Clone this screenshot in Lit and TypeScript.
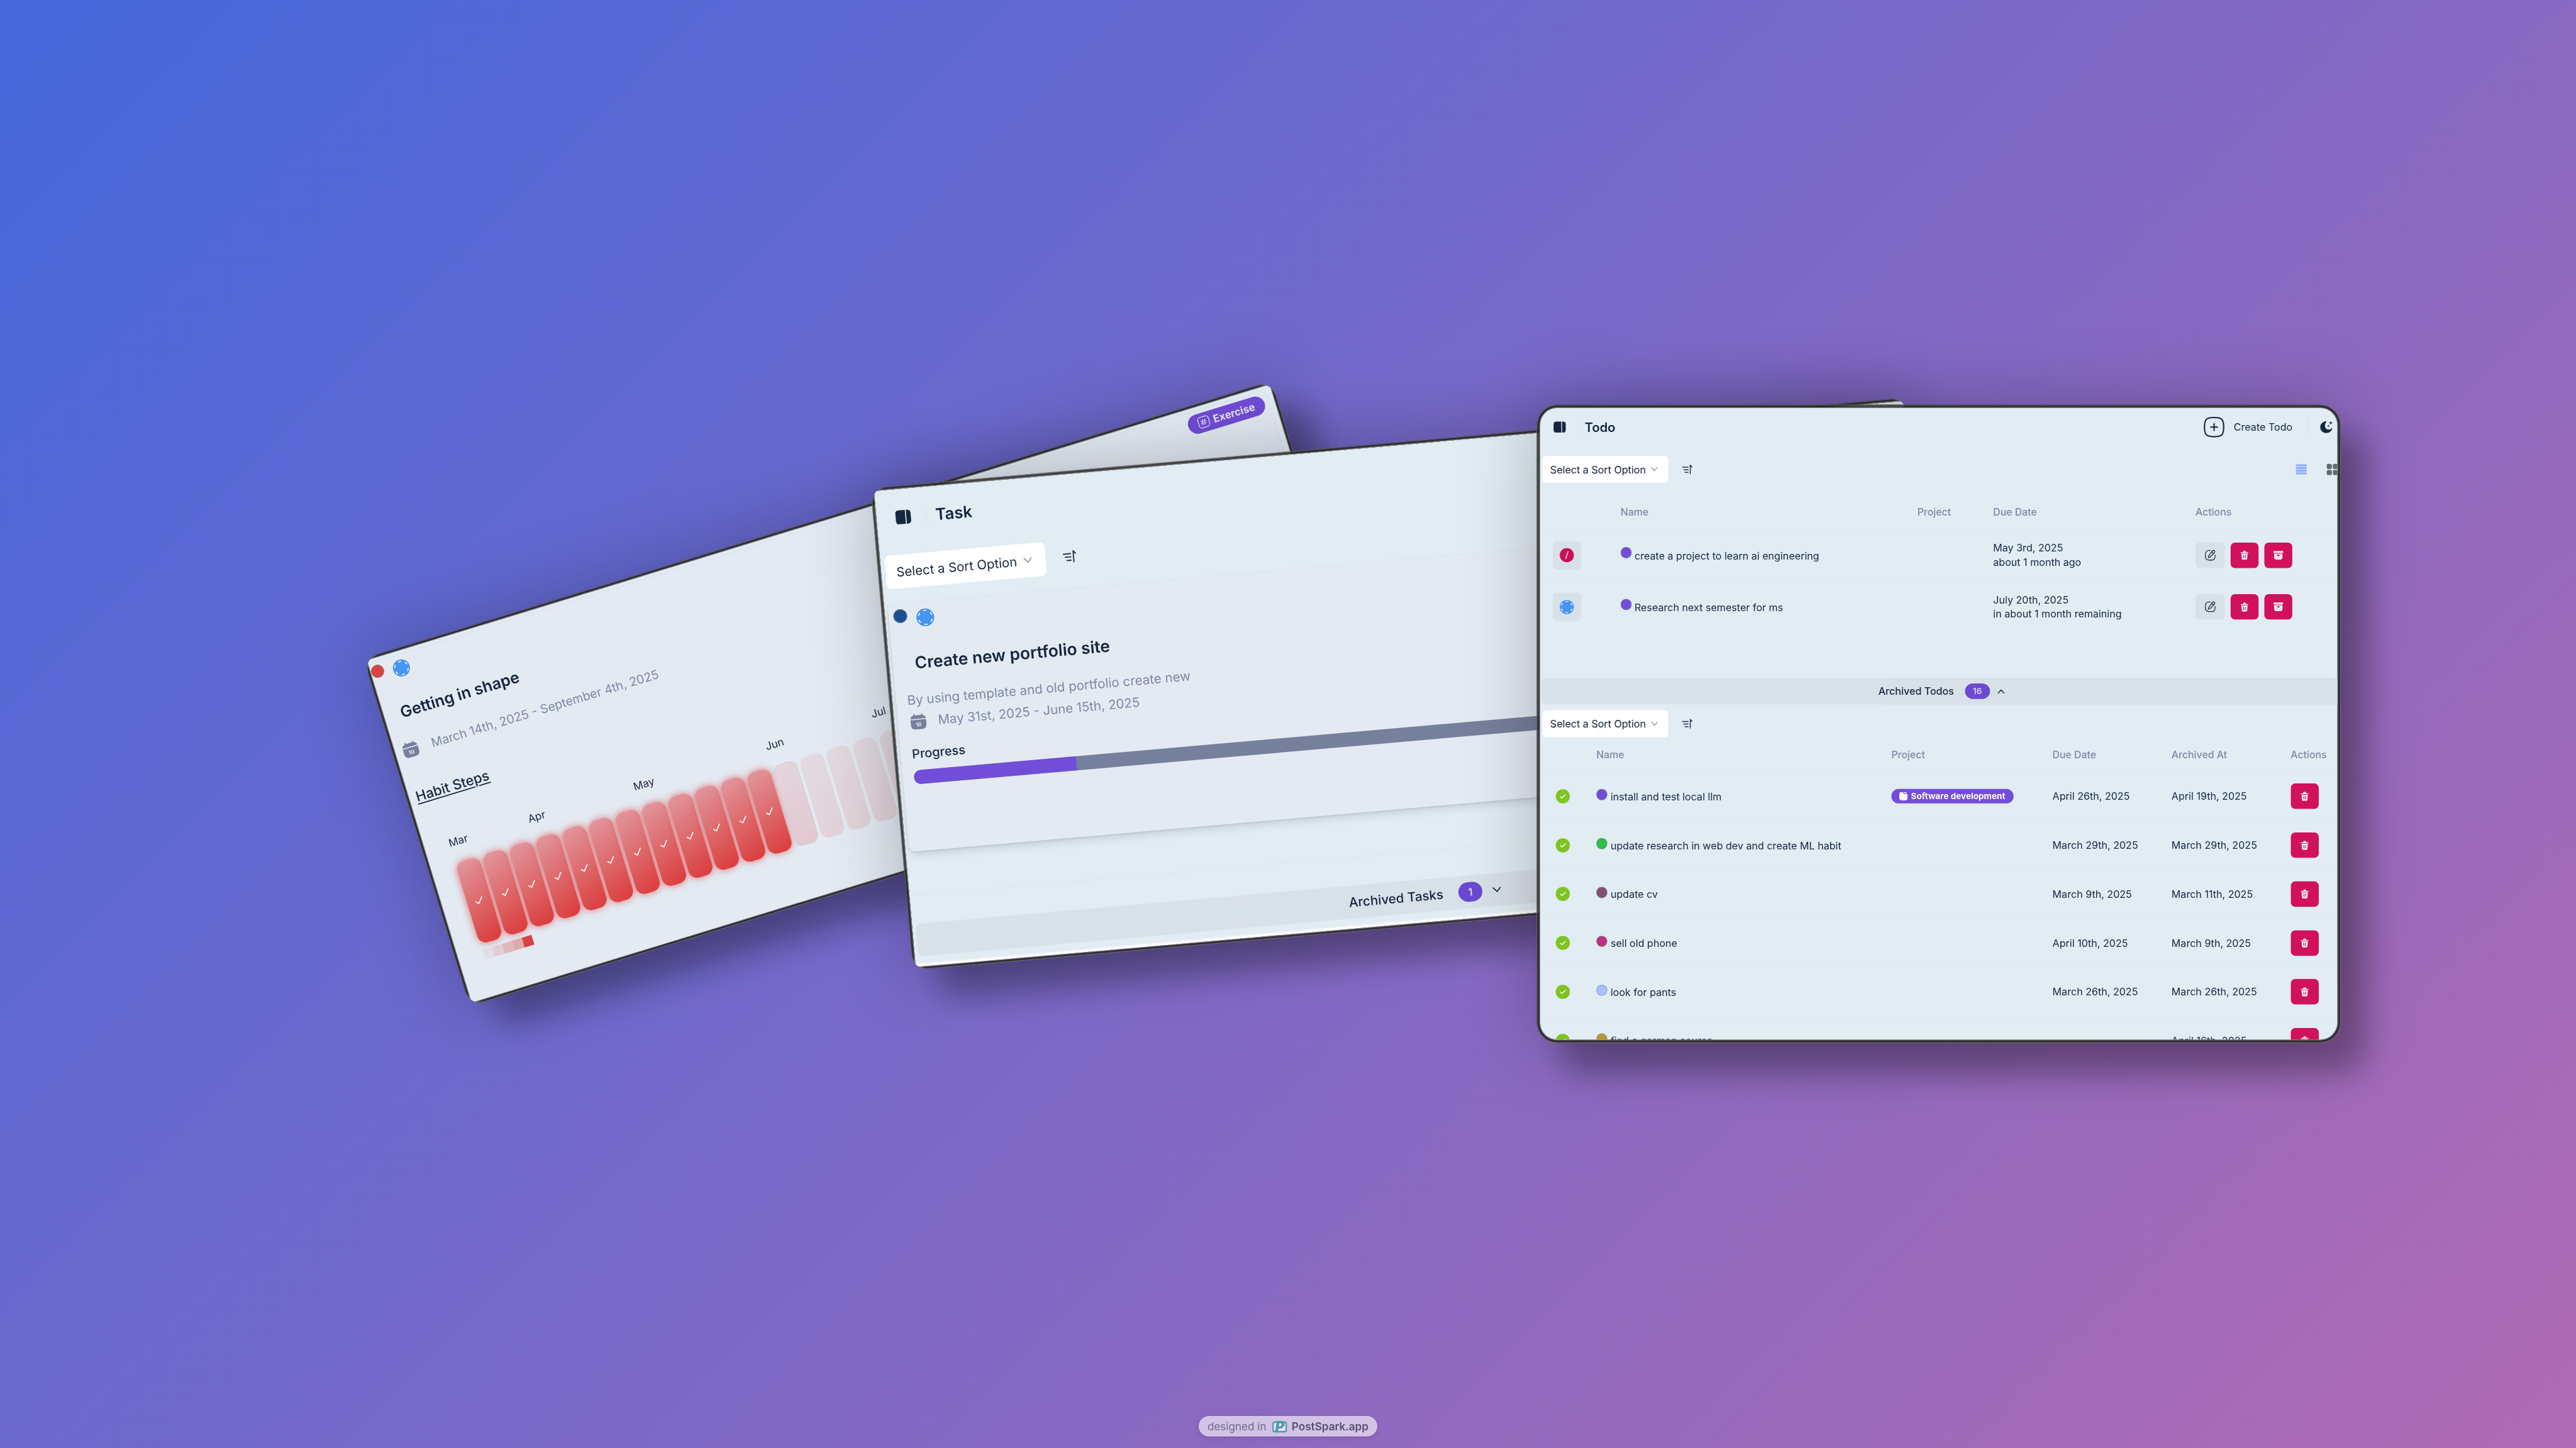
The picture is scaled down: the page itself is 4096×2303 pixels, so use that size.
import { LitElement, html, css, svg, nothing } from "lit";
import { customElement, property } from "lit/decorators.js";
import { classMap } from "lit/directives/class-map.js";

/* ---------- icons ---------- */

const icons = {
  sidebar: svg`<svg viewBox="0 0 34 31"><path fill="currentColor" d="M8 0h13.6v31H8c-5.600 0-8-2.400-8-8V8C0 2.400 2.400 0 8 0z"/><path fill="currentColor" d="M23.800 0H26c5.600 0 8 2.400 8 8v15c0 5.600-2.400 8-8 8h-2.200z"/></svg>`,
  chevronDown: svg`<svg viewBox="0 0 20 13"><path d="M1.500 1.500 10 11l8.500-9.500" fill="none" stroke="currentColor" stroke-width="2.600" stroke-linecap="round" stroke-linejoin="round"/></svg>`,
  chevronUp: svg`<svg viewBox="0 0 20 13"><path d="M1.500 11.500 10 2l8.500 9.500" fill="none" stroke="currentColor" stroke-width="2.600" stroke-linecap="round" stroke-linejoin="round"/></svg>`,
  sort: svg`<svg viewBox="0 0 30 30"><g fill="none" stroke="currentColor" stroke-width="2.700" stroke-linecap="round" stroke-linejoin="round"><path d="M1.500 8.200h16M5 15.500h12.500M8.500 23h9"/><path d="M23.500 27V2.500l5 5.600"/></g></svg>`,
  pending: svg`<svg viewBox="0 0 40 40"><circle cx="20" cy="20" r="20" fill="#4796ef"/><circle cx="20" cy="20" r="15.800" fill="none" stroke="#e3eaf2" stroke-width="2.800" stroke-linecap="round" pathLength="60" stroke-dasharray="3.200 6.800" stroke-dashoffset="-3.400"/></svg>`,
  overdue: svg`<svg viewBox="0 0 40 40"><circle cx="20" cy="20" r="20" fill="#c91058"/><path d="M23 10.500 17.200 29.500" stroke="#e3d3de" stroke-width="3" stroke-linecap="round"/></svg>`,
  done: svg`<svg viewBox="0 0 40 40"><circle cx="20" cy="20" r="20" fill="#7ec422"/><path d="M13.500 20.700 17.700 24.700 27 15.800" fill="none" stroke="#e9f3e0" stroke-width="3" stroke-linecap="round" stroke-linejoin="round"/></svg>`,
  check: svg`<svg viewBox="0 0 24 24"><path d="M2.500 13.500 9 20 21.500 4.500" fill="none" stroke="#fdf3f3" stroke-width="3" stroke-linecap="round" stroke-linejoin="round"/></svg>`,
  edit: svg`<svg viewBox="0 0 30 30"><g fill="none" stroke="currentColor" stroke-width="2.300" stroke-linecap="round" stroke-linejoin="round"><path d="M28.500 14.500V16c0 9.500-3 12.500-13.500 12.500S1.500 25.500 1.500 15 4.500 1.500 13 1.500h2"/><path d="m20 3.600 1.300-1.300c3.500-3 8.200 1.700 5.300 5.200l-11 11.400c-1.600 1.600-4.200 2-5.900 2.300.3-1.900.5-4.200 2-5.700z"/><path d="M19.500 4.800c.6 2.500 2.200 4.200 4.900 4.900"/></g></svg>`,
  trash: svg`<svg viewBox="0 0 24 29"><path fill="currentColor" d="M1.800 5.700h5C7.600 2.800 8.700 1 12 1s4.400 1.800 5.200 4.700h5c1.800 0 1.800 2.700 0 2.700H1.800C0 8.400 0 5.700 1.800 5.700z"/><path fill="currentColor" fill-rule="evenodd" d="M2.600 10h18.800l-1.200 14c-.3 3-1.500 4-4.300 4H8.100c-2.800 0-4-1-4.300-4zM8.200 14l.5 9h1.900l-.4-9zm5.600 0-.4 9h1.900l.5-9z"/></svg>`,
  archive: svg`<svg viewBox="0 0 28 25"><path fill="currentColor" d="M2 0h24c1.400 0 2 .6 2 2v1.800c0 1.400-.6 2-2 2H2c-1.400 0-2-.6-2-2V2C0 .6.600 0 2 0z"/><path fill="currentColor" fill-rule="evenodd" d="M2 7.600h24V17c0 5.800-2 8-8 8h-8c-6 0-8-2.200-8-8zm8.500 3.200v2.400c0 1 .5 1.500 1.500 1.500h4c1 0 1.500-.5 1.500-1.500v-2.400z"/></svg>`,
  plusBox: svg`<svg viewBox="0 0 56 56"><path d="M2 28C2 7 7 2 28 2s26 5 26 26-5 26-26 26S2 49 2 28z" fill="none" stroke="currentColor" stroke-width="3.600"/><path d="M28 19v18M19 28h18" stroke="currentColor" stroke-width="3.600" stroke-linecap="round"/></svg>`,
  moon: svg`<svg viewBox="0 0 34 34"><path fill="currentColor" d="M16 1.500C7.500 2.300 0 9 0 17.600 0 26.500 7 34 16.500 34 25 34 32 28.500 33.200 21c.2-1.200-1-1.500-1.600-.6-4.600 6.400-15.800 5-18-2.900-1.600-5.700.6-10.800 3.300-14.300.7-1-.1-1.800-.9-1.700z"/><path fill="currentColor" d="m29 1 1.500 3.600L34 6l-3.500 1.500L29 11l-1.500-3.500L24 6l3.500-1.400zM22.500 10.500l1.100 2.400 2.400 1.100-2.400 1.100-1.100 2.400-1.100-2.400L19 14l2.400-1.100z"/></svg>`,
  list: svg`<svg viewBox="0 0 30 28"><rect width="30" height="28" rx="3" fill="#bfd2fa"/><rect width="30" height="5" rx="2"/><rect y="7.600" width="30" height="5" rx="2"/><rect y="15.200" width="30" height="5" rx="2"/><rect y="22.800" width="30" height="5" rx="2"/></svg>`,
  grid: svg`<svg viewBox="0 0 31 31"><rect width="14" height="14" rx="4.500"/><rect x="16.800" width="14" height="14" rx="4.500"/><rect y="16.800" width="14" height="14" rx="4.500"/><rect x="16.800" y="16.800" width="14" height="14" rx="4.500"/></svg>`,
  calendar: svg`<svg viewBox="0 0 44 44"><path fill="currentColor" d="M9.500 1.500c0-2 3-2 3 0V4.300c2.400-.2 16.600-.2 19 0V1.500c0-2 3-2 3 0v3.100c5.500.8 8.700 3.800 9.300 9.900H.200C.8 8.400 4 5.400 9.500 4.600z"/><path fill="currentColor" d="M0 17h44v12c0 11-4 15-15 15H15C4 44 0 40 0 29z"/><text x="22" y="36" text-anchor="middle" font-family="Inter, sans-serif" font-weight="700" font-size="15" fill="#e3eaf2">10</text></svg>`,
  hash: svg`<svg viewBox="0 0 34 34"><rect x="1.500" y="1.500" width="31" height="31" rx="8" fill="none" stroke="currentColor" stroke-width="2.200"/><path d="M14.800 9.500 12.600 24.500M21.400 9.500 19.200 24.500M10 14h14.500M9.500 20H24" stroke="currentColor" stroke-width="2.200" stroke-linecap="round"/></svg>`,
  folder: svg`<svg viewBox="0 0 24 24"><path fill="currentColor" d="M1 6c0-4 1.500-5.500 5.500-5.500h4.200l3 5.200h8.800c1 1.300 1 3 1 5.300v5c0 5.500-1.500 7.500-7 7.500h-8C2.500 23.500 1 21.500 1 16z"/><path fill="currentColor" d="M13.200.5h3.300c2.800 0 4.600 1 5.400 3.200h-6.900z"/></svg>`,
  postspark: svg`<svg viewBox="0 0 40 33"><rect x="2" y="5" width="36" height="26" rx="4" fill="#ece6f5" stroke="#4c9cab" stroke-width="4"/><text x="7.500" y="30.500" font-family="Inter, sans-serif" font-style="italic" font-weight="900" font-size="39" fill="#4c9cab">P</text></svg>`,
};

const shared = css`
  :host {
    display: block;
    font-family: Inter, "Liberation Sans", sans-serif;
    color: #16263f;
    box-sizing: border-box;
  }
  * { box-sizing: border-box; }
  svg { display: block; width: 100%; height: 100%; overflow: visible; }
  .row { display: flex; align-items: center; }
  .grow { flex: 1; }
  .muted { color: #7f88a6; }
`;

/* ---------- shared pieces ---------- */

@customElement("window-frame")
class WindowFrame extends LitElement {
  static styles = css`
    :host {
      display: block;
      box-sizing: border-box;
      padding: var(--edge, 9px);
      border-radius: var(--radius, 44px);
      overflow: hidden;
      background: rgba(36, 36, 36, 0.86);
      box-shadow:
        inset 0 0 0 2px rgba(160, 160, 160, 0.55),
        0 0 200px rgba(0, 0, 0, 0.25),
        70px 84px 84px rgba(0, 0, 0, 0.28);
    }
    .screen {
      width: 100%;
      height: 100%;
      overflow: hidden;
      border-radius: var(--inner, 0);
      background: #e1ecf3;
    }
    .ring {
      height: 100%;
      border-radius: var(--inner, 0);
      box-shadow: 0 0 0 2px #7b7b7b;
    }
  `;
  render() {
    return html`<div class="ring"><div class="screen"><slot></slot></div></div>`;
  }
}

@customElement("sort-picker")
class SortPicker extends LitElement {
  static styles = [
    shared,
    css`
      :host { display: flex; align-items: center; }
      .select {
        display: flex;
        align-items: center;
        justify-content: space-between;
        width: var(--w, 347px);
        height: var(--h, 74.600px);
        padding: 0 var(--pr, 29px) 0 var(--pl, 22px);
        border-radius: var(--r, 10px);
        background: #fff;
        font-size: var(--fs, 27.900px);
        white-space: nowrap;
      }
      .select span:first-child { padding-top: 1.500px; }
      .chevron { width: var(--cw, 18px); height: var(--ch, 11.500px); color: #8b93a6; }
      .sort { width: var(--sw, 29px); height: var(--sw, 29px); margin-left: var(--sm, 38.500px); color: #24354f; }
    `,
  ];
  render() {
    return html`
      <div class="select"><span>Select a Sort Option</span><span class="chevron">${icons.chevronDown}</span></div>
      <span class="sort">${icons.sort}</span>
    `;
  }
}

@customElement("archive-bar")
class ArchiveBar extends LitElement {
  static styles = [
    shared,
    css`
      .bar {
        display: flex;
        align-items: center;
        height: 100%;
        background: #d8e0e8;
        border-radius: var(--r, 12px);
        font-weight: 500;
        font-size: var(--fs, 27.900px);
        white-space: nowrap;
      }
      .count {
        display: grid;
        place-items: center;
        width: var(--bw, 69px);
        height: var(--bh, 43px);
        margin-left: var(--bm, 30px);
        border-radius: 999px;
        background: #6c49d2;
        color: #d9d2f1;
        font-weight: 600;
        font-size: var(--bfs, 23.300px);
      }
      .chevron { width: var(--cw, 19px); height: var(--ch, 12px); margin-left: var(--cm, 21px); }
    `,
  ];
  @property() label = "";
  @property({ type: Number }) count = 0;
  @property({ type: Boolean }) open = false;
  render() {
    return html`<div class="bar">
      <span>${this.label}</span><span class="count">${this.count}</span>
      <span class="chevron">${this.open ? icons.chevronUp : icons.chevronDown}</span>
    </div>`;
  }
}

/* ---------- habit card ---------- */

const MONTHS = [
  { name: "Mar", week: 0 },
  { name: "Apr", week: 3 },
  { name: "May", week: 7 },
  { name: "Jun", week: 12 },
  { name: "Jul", week: 16 },
];
const WEEKS = 24;
const DONE_WEEKS = 12;

@customElement("habit-card")
class HabitCard extends LitElement {
  static styles = [
    shared,
    css`
      :host { height: 100%; padding: 11px 0 0 1px; }
      .panel {
        width: 2583px;
        height: 990px;
        border-radius: 20px 20px 0 0;
        background: #e3eaf2;
        box-shadow: 0 0 6px rgba(120, 130, 150, 0.15);
      }
      .top { height: 72px; padding: 0 11px 0 0; }
      .dot {
        width: 36px; height: 36px; margin: -20px 24px 0 0; border-radius: 50%;
        background: #db4141; box-shadow: inset 0 0 0 2px rgba(120, 120, 140, 0.55);
      }
      .status { width: 47px; height: 47px; }
      .pill {
        display: flex; align-items: center; gap: 11px;
        width: 220px; height: 54px; margin-top: -3px; padding-left: 28px;
        border-radius: 27px; background: #704cd6; color: #e6e2f5;
        font-weight: 700; font-size: 28.600px;
      }
      .pill .ic { width: 33px; height: 33px; flex: none; }
      .title { height: 60px; margin: 51px 0 0 45px; line-height: 60px; font-weight: 600; font-size: 43.500px; }
      .date { height: 60px; margin: 45px 0 0 21px; font-size: 33.800px; }
      .date .ic { width: 43px; height: 43px; margin-right: 38px; color: #787f9e; }
      .steps {
        height: 44px; margin: 77.500px 0 0 18px; line-height: 44px; font-weight: 500; font-size: 38px;
        text-decoration: underline; text-decoration-thickness: 3px; text-underline-offset: 6px;
      }
      .chart {
        width: 2523px; height: 427px; margin: 72px 0 0 30px; padding: 35px 0 0 36px;
        border-radius: 20px; border: 1.500px solid #dfe7ee;
      }
      .months { display: grid; grid-template-columns: repeat(30, 76.100px); height: 40px; line-height: 40px; font-size: 29.300px; }
      .bars { display: flex; gap: 8.100px; margin-top: 37px; }
      .bar {
        display: grid; place-items: center; flex: none; width: 68px; height: 234px; border-radius: 24px;
        background: linear-gradient(150deg, rgba(219, 64, 64, 0.09), rgba(219, 64, 64, 0.14));
      }
      .bar.done {
        background: linear-gradient(160deg, #e0949a 4%, #db3f3f 96%);
        box-shadow: 0 0 20px rgba(226, 66, 66, 0.75);
      }
      .bar.now {
        background: linear-gradient(160deg, #e4d5dd, #e2c8d0);
        box-shadow: inset 0 0 0 2px #ced0d0;
      }
      .bar .ic { width: 24px; height: 24px; }
      .legend { display: flex; margin: 16px 0 0 3px; }
      .legend span { width: 28.200px; height: 28.200px; background: #db4141; }
      .l0 { opacity: 0.07; }
      .l1 { opacity: 0.17; }
      .l2 { opacity: 0.3; }
      .l3 { opacity: 0.38; }
    `,
  ];
  render() {
    return html`<div class="panel">
      <div class="row top">
        <span class="dot"></span><span class="status">${icons.pending}</span><span class="grow"></span>
        <span class="pill"><span class="ic">${icons.hash}</span>Exercise</span>
      </div>
      <div class="title">Getting in shape</div>
      <div class="row date muted"><span class="ic">${icons.calendar}</span>March 14th, 2025 - September 4th, 2025</div>
      <div class="steps">Habit Steps</div>
      <div class="chart">
        <div class="months">
          ${MONTHS.map((m) => html`<span style="grid-column:${m.week + 1};grid-row:1">${m.name}</span>`)}
        </div>
        <div class="bars">
          ${Array.from({ length: WEEKS }, (_, i) => html`<span
            class=${classMap({ bar: true, done: i < DONE_WEEKS, now: i === DONE_WEEKS })}
          >${i < DONE_WEEKS ? html`<span class="ic">${icons.check}</span>` : nothing}</span>`)}
        </div>
        <div class="legend">${["l0", "l1", "l2", "l3", "l4"].map((c) => html`<span class=${c}></span>`)}</div>
      </div>
    </div>`;
  }
}

/* ---------- task card ---------- */

@customElement("task-card")
class TaskCard extends LitElement {
  static styles = [
    shared,
    css`
      :host { display: flex; flex-direction: column; height: 100%; background: #e1ecf3; }
      .head { height: 157px; padding-left: 53px; font-weight: 600; font-size: 44.500px; }
      .head .ic { width: 42px; height: 39px; }
      .head .div { width: 2px; height: 60px; margin: 0 22px 0 44px; background: #dfe7ef; }
      sort-picker {
        margin: 24px 0 0 12px;
        --w: 443px; --h: 93px; --pl: 30px; --pr: 38px; --r: 14px; --fs: 35.300px;
        --cw: 23px; --ch: 15px; --sw: 37px; --sm: 48px;
      }
      .panel {
        width: 2828px; height: 683px; margin: 43px 0 0 10px; padding: 18px 31px 0 31px;
        border-radius: 20px; background: #e3eaf2;
        box-shadow: 0 12px 24px -4px rgba(60, 70, 90, 0.2), 0 2px 4px rgba(60, 70, 90, 0.12);
      }
      .top { height: 49px; }
      .dot {
        width: 38px; height: 38px; margin: -20px 25px 0 -18px; border-radius: 50%;
        background: #174f92; box-shadow: inset 0 0 0 2px rgba(120, 125, 150, 0.7);
      }
      .status { width: 49px; height: 49px; }
      .title { height: 60px; margin: 68px 0 0 30px; line-height: 60px; font-weight: 600; font-size: 45.600px; }
      .desc { height: 60px; margin-top: 41px; line-height: 60px; font-size: 35.700px; }
      .date { height: 60px; padding-left: 4px; font-size: 35.300px; }
      .date .ic { width: 43px; height: 43px; margin-right: 33px; color: #787f9e; }
      .progress { height: 40px; margin-top: 38px; line-height: 40px; font-weight: 500; font-size: 34.600px; }
      .track { height: 39px; margin-top: 26px; border-radius: 20px; overflow: hidden; background: #767f9c; }
      .fill { height: 100%; background: #724dd9; }
      .rule { height: 3px; margin-top: 119px; background: #e2e7ef; }
      archive-bar {
        height: 90px; margin: 77px 0 0 10px;
        --r: 16px; --fs: 35.700px; --bw: 66px; --bh: 54px; --bm: 42px; --bfs: 29px; --cw: 23px; --ch: 15px; --cm: 29px;
        padding-left: 1195px;
        background: #d8e0e8;
        border-radius: 16px;
      }
      .strip { height: 9px; margin-top: auto; background: linear-gradient(#eef1f5, #fff 70%); }
    `,
  ];
  @property({ type: Number }) progress = 16.25;
  render() {
    return html`
      <div class="row head"><span class="ic">${icons.sidebar}</span><span class="div"></span>Task</div>
      <sort-picker></sort-picker>
      <div class="panel">
        <div class="row top"><span class="dot"></span><span class="status">${icons.pending}</span></div>
        <div class="title">Create new portfolio site</div>
        <div class="desc muted">By using template and old portfolio create new</div>
        <div class="row date muted"><span class="ic">${icons.calendar}</span>May 31st, 2025 - June 15th, 2025</div>
        <div class="progress">Progress</div>
        <div class="track"><div class="fill" style="width:${this.progress}%"></div></div>
      </div>
      <div class="rule"></div>
      <archive-bar label="Archived Tasks" count="1"></archive-bar>
      <div class="strip"></div>
    `;
  }
}

/* ---------- todo card ---------- */

const TODOS = [
  { icon: icons.overdue, color: "#734dd9", name: "create a project to learn ai engineering", due: "May 3rd, 2025", rel: "about 1 month ago" },
  { icon: icons.pending, color: "#734dd9", name: "Research next semester for ms", due: "July 20th, 2025", rel: "in about 1 month remaining" },
];

const ARCHIVED = [
  { color: "#734dd9", name: "i\u0307nstall and test local llm", project: "Software development", due: "April 26th, 2025", at: "April 19th, 2025" },
  { color: "#30bd49", name: "update research in web dev and create ML habit", due: "March 29th, 2025", at: "March 29th, 2025" },
  { color: "#884c70", name: "update cv", due: "March 9th, 2025", at: "March 11th, 2025" },
  { color: "#bb307f", name: "sell old phone", due: "April 10th, 2025", at: "March 9th, 2025" },
  { color: "#a9c0ff", name: "look for pants", due: "March 26th, 2025", at: "March 26th, 2025" },
  { color: "#b89a2a", name: "find a german course", due: "", at: "April 16th, 2025" },
];

@customElement("todo-card")
class TodoCard extends LitElement {
  static styles = [
    shared,
    css`
      :host { height: 100%; font-size: 27.900px; white-space: nowrap; }
      .head { height: 105px; padding: 0 13px 0 37.500px; }
      .head .side { width: 33.500px; height: 31px; }
      .head .name { font-weight: 600; font-size: 35px; }
      .div { width: 2px; height: 46px; background: #dde6ee; }
      .head .div.a { margin: 0 16px 0 34px; }
      .head .plus { width: 57px; height: 57px; }
      .head .create { margin-left: 26px; font-weight: 400; }
      .head .div.b { margin: 0 34px 0 40px; }
      .head .moon { width: 34px; height: 34px; }
      .tools { height: 75px; margin-top: 27px; padding-left: 6px; }
      .tools .list { width: 30px; height: 28px; fill: #8fb0ff; }
      .tools .grid { width: 31px; height: 31px; margin-left: 55px; fill: #62696f; margin-right: -2px; }
      .table { display: grid; }
      .tr { display: grid; align-items: center; padding-top: 1.500px; border-bottom: 1.500px solid #dee7ef; }
      .t1 .tr { grid-template-columns: 222px 818px 209px 557.500px 1fr; height: 142.600px; }
      .t1 .tr.th { height: 95px; }
      .t1 .tr:last-child, .t2 .tr:last-child { border-color: transparent; }
      .t2 .tr { grid-template-columns: 155px 813.500px 444px 328px 328.500px 1fr; height: 134.800px; }
      .t2 .tr.th { height: 95px; }
      .t1 { margin-top: 32.500px; }
      .tr.th { color: #7f88a6; font-weight: 500; font-size: 27.500px; }
      .state { display: grid; place-items: center; width: 78px; height: 78px; margin-left: 35px; border-radius: 12px; background: #d8e0e8; }
      .state span { width: 39px; height: 39px; }
      .ok { width: 39px; height: 39px; margin-left: 43px; }
      .dot {
        width: 30.500px; height: 30.500px; margin: -14px 8px 0 0; border-radius: 50%;
        box-shadow: inset 0 0 0 2px rgba(120, 130, 150, 0.6);
      }
      .t2 .dot { margin-top: -9px; margin-right: 9px; }
      .label { padding-top: 2px; }
      .due { line-height: 38.800px; }
      .actions { display: flex; gap: 15.500px; }
      .btn { display: grid; place-items: center; width: 77.500px; height: 70px; border-radius: 12px; background: #d1115b; color: #efe6ef; }
      .btn.edit { width: 81px; background: #d8e0e8; color: #1d2d48; }
      .btn .e { width: 30px; height: 30px; }
      .btn .t { width: 22.500px; height: 27px; }
      .btn .a { width: 27px; height: 24px; }
      archive-bar { height: 71.700px; margin: 125.500px -10px 0 4px; padding-left: 928.500px; background: #d8e0e8; border-radius: 12px; }
      .again { height: 74px; margin-top: 17px; padding-left: 6px; }
      .pill {
        display: inline-flex; align-items: center; gap: 9px; width: 337px; height: 40px; padding-left: 21px;
        border-radius: 20px; background: #734dd9; color: #fff; font-weight: 700; font-size: 23.500px; vertical-align: middle;
      }
      .pill .ic { width: 24px; height: 24px; }
    `,
  ];
  render() {
    return html`
      <div class="row head">
        <span class="side">${icons.sidebar}</span><span class="div a"></span><span class="name">Todo</span>
        <span class="grow"></span>
        <span class="plus">${icons.plusBox}</span><span class="create">Create Todo</span>
        <span class="div b"></span><span class="moon">${icons.moon}</span>
      </div>
      <div class="row tools">
        <sort-picker></sort-picker><span class="grow"></span>
        <span class="list">${icons.list}</span><span class="grid">${icons.grid}</span>
      </div>
      <div class="table t1">
        <div class="tr th"><span></span><span>Name</span><span>Project</span><span>Due Date</span><span>Actions</span></div>
        ${TODOS.map((t) => html`<div class="tr">
          <span class="state"><span>${t.icon}</span></span>
          <span class="row"><span class="dot" style="background:${t.color}"></span><span class="label">${t.name}</span></span>
          <span></span>
          <span class="due">${t.due}<br />${t.rel}</span>
          <span class="actions">
            <span class="btn edit"><span class="e">${icons.edit}</span></span>
            <span class="btn"><span class="t">${icons.trash}</span></span>
            <span class="btn"><span class="a">${icons.archive}</span></span>
          </span>
        </div>`)}
      </div>
      <archive-bar label="Archived Todos" count="16" open></archive-bar>
      <div class="row again"><sort-picker></sort-picker></div>
      <div class="table t2">
        <div class="tr th"><span></span><span>Name</span><span>Project</span><span>Due Date</span><span>Archived At</span><span>Actions</span></div>
        ${ARCHIVED.map((t) => html`<div class="tr">
          <span class="ok">${icons.done}</span>
          <span class="row"><span class="dot" style="background:${t.color}"></span><span class="label">${t.name}</span></span>
          <span>${t.project ? html`<span class="pill"><span class="ic">${icons.folder}</span>${t.project}</span>` : nothing}</span>
          <span>${t.due}</span>
          <span>${t.at}</span>
          <span class="btn"><span class="t">${icons.trash}</span></span>
        </div>`)}
      </div>
    `;
  }
}

/* ---------- canvas ---------- */

@customElement("app-root")
class AppRoot extends LitElement {
  static styles = css`
    :host {
      display: block;
      width: 100vw;
      height: 100vh;
      overflow: hidden;
      background: linear-gradient(135deg, #4568dc, #b06ab3);
      font-family: Inter, "Liberation Sans", sans-serif;
    }
    .stage {
      position: relative;
      width: 7100px;
      height: 3992px;
      transform: scale(0.576901);
      transform-origin: 0 0;
    }
    window-frame { position: absolute; }
    .habit { left: 1089.600px; top: 1409.500px; width: 2618.500px; height: 1003.500px; transform: rotate(-17deg); }
    .task { left: 2452px; top: 1217.500px; width: 2866px; height: 1335px; transform: rotate(-5deg); }
    .todo { left: 4234.600px; top: 1114.700px; width: 2217px; height: 1761px; --edge: 10px; --radius: 57px; --inner: 47px; }
    .badge {
      position: absolute;
      left: 3304px;
      top: 3904px;
      display: flex;
      align-items: center;
      box-sizing: border-box;
      width: 492px;
      height: 56px;
      padding-left: 22px;
      border: 2px solid #ddd0ec;
      border-radius: 28px;
      background: #d2c2e6;
      box-shadow: 0 4px 12px rgba(60, 20, 90, 0.2);
      color: #74677f;
      font-size: 29.600px;
      white-space: nowrap;
    }
    .badge svg { width: 40px; height: 33px; margin: 0 13px 0 17px; overflow: visible; }
    .badge b { font-weight: 600; font-size: 29.700px; color: #5c4f6b; }
  `;
  render() {
    return html`<div class="stage">
      <window-frame class="habit"><habit-card></habit-card></window-frame>
      <window-frame class="task"><task-card></task-card></window-frame>
      <window-frame class="todo"><todo-card></todo-card></window-frame>
      <div class="badge">designed in ${icons.postspark}<b>PostSpark.app</b></div>
    </div>`;
  }
}
